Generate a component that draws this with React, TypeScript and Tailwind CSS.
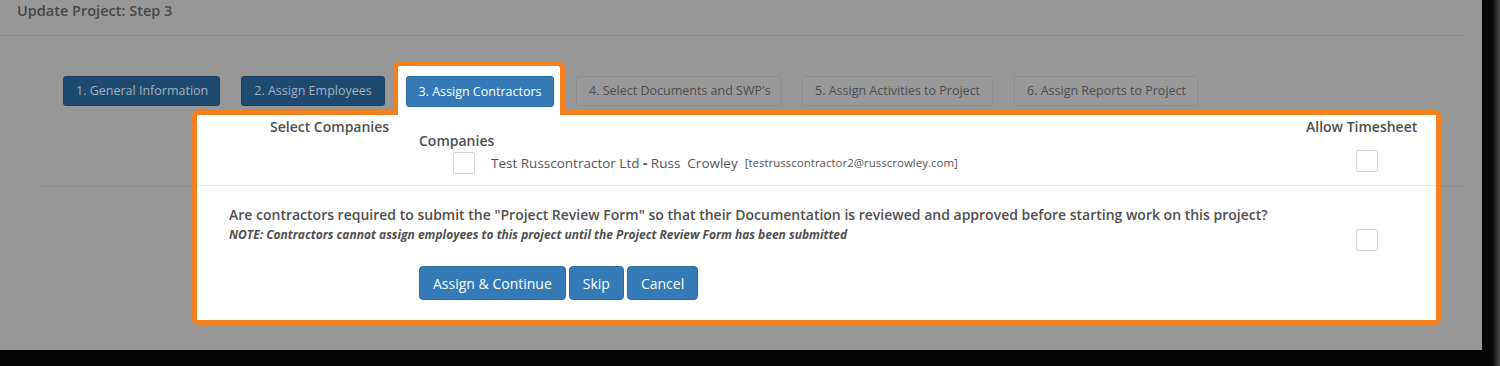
const font = { fontFamily: '"Open Sans", "Liberation Sans", sans-serif' };

const dimTab = 'h-[30px] px-[12px] rounded-[3px] text-[12.5px] leading-[28px] whitespace-nowrap';

const CheckBox = ({ className = '' }: { className?: string }) => (
  <div className={`w-[22px] h-[22px] border border-[#d4d4d4] rounded-[2px] bg-white ${className}`} />
);

const App = () => {
  return (
    <div
      className="w-[1500px] h-[366px] overflow-hidden bg-[linear-gradient(to_right,#050505_0,#050505_1492px,#4a4a4a_1500px)]"
      style={font}
    >
      <div className="w-[1482px] h-[350px] bg-[#979797] flex flex-col">
        {/* title */}
        <div className="h-[35px] pl-[17px] pt-[1px]">
          <p className="text-[14.5px] leading-[20px] font-semibold text-[#474747]">Update Project: Step 3</p>
        </div>
        <div className="w-[1465px] h-px bg-[#8b8b8b]" />

        {/* step tabs */}
        <div className="flex items-start mt-[25px] pl-[63px] relative z-10">
          <div className={`${dimTab} mt-[15px] w-[157px] bg-[#1f4a70] border border-[#1a3f60] text-[#a0b0bf] text-center`}>
            1. General Information
          </div>
          <div className={`${dimTab} mt-[15px] ml-[21px] w-[144px] bg-[#1f4a70] border border-[#1a3f60] text-[#a0b0bf] text-center`}>
            2. Assign Employees
          </div>
          <div className="ml-[8px] w-[172px] h-[54px] border-[5px] border-b-0 border-[#f4801f] rounded-t-[7px] bg-white pl-[8px] pt-[10px]">
            <div className="w-[148px] h-[31px] rounded-[3px] bg-[#337ab7] border border-[#2e6da4] text-white text-[12.5px] leading-[29px] text-center">
              3. Assign Contractors
            </div>
          </div>
          <div className={`${dimTab} mt-[15px] ml-[11px] w-[205px] bg-[#999] border border-[#8d8d8d] text-[#4c4c4c] text-center`}>
            4. Select Documents and SWP's
          </div>
          <div className={`${dimTab} mt-[15px] ml-[21px] w-[191px] bg-[#999] border border-[#8d8d8d] text-[#4c4c4c] text-center`}>
            5. Assign Activities to Project
          </div>
          <div className={`${dimTab} mt-[15px] ml-[21px] w-[184px] bg-[#999] border border-[#8d8d8d] text-[#4c4c4c] text-center`}>
            6. Assign Reports to Project
          </div>
        </div>

        {/* content row with highlighted panel */}
        <div className="flex ml-[38px] mt-[-5px]">
          <div className="w-[154px]">
            <div className="mt-[76px] h-px bg-[#8d8d8d]" />
          </div>

          <div className="w-[1249px] h-[215px] border-[5px] border-[#f4801f] rounded-[6px] bg-white flex flex-col text-[#4f4f4f]">
            {/* companies */}
            <div className="h-[71px] flex border-b border-[#ebebeb]">
              <div className="w-[222px] pl-[73px] pt-[2px]">
                <p className="text-[14px] leading-[19px] font-semibold">Select Companies</p>
              </div>
              <div className="flex-1 pt-[16px]">
                <p className="text-[14px] leading-[19px] font-semibold">Companies</p>
                <div className="flex items-center mt-[2px] ml-[34px]">
                  <CheckBox />
                  <span className="ml-[16px] text-[13.5px] text-[#555]">
                    Test Russcontractor Ltd <b className="font-bold">-</b> Russ&nbsp; Crowley
                  </span>
                  <span className="ml-[7px] text-[11.5px] text-[#555]">[testrusscontractor2@russcrowley.com]</span>
                </div>
              </div>
              <div className="w-[130px] pt-[2px]">
                <p className="text-[14px] leading-[19px] font-semibold">Allow Timesheet</p>
                <CheckBox className="mt-[14px] ml-[50px]" />
              </div>
            </div>

            {/* review form */}
            <div className="flex flex-1">
              <div className="flex-1 pl-[32px] pt-[19px]">
                <p className="text-[14px] leading-[19px] font-semibold">
                  Are contractors required to submit the "Project Review Form" so that their Documentation is reviewed and approved before starting work on this project?
                </p>
                <p className="mt-[3px] text-[12px] leading-[16px] font-bold italic text-[#505050]">
                  NOTE: Contractors cannot assign employees to this project until the Project Review Form has been submitted
                </p>
                <div className="flex gap-[3px] ml-[190px] mt-[23px]">
                  <button className="h-[34px] px-[13px] rounded-[4px] bg-[#337ab7] border border-[#2e6da4] text-white text-[14px]">
                    Assign &amp; Continue
                  </button>
                  <button className="h-[34px] px-[13px] rounded-[4px] bg-[#337ab7] border border-[#2e6da4] text-white text-[14px]">
                    Skip
                  </button>
                  <button className="h-[34px] px-[13px] rounded-[4px] bg-[#337ab7] border border-[#2e6da4] text-white text-[14px]">
                    Cancel
                  </button>
                </div>
              </div>
              <div className="w-[80px] pt-[43px]">
                <CheckBox />
              </div>
            </div>
          </div>

          <div className="w-[25px]">
            <div className="mt-[76px] h-px bg-[#8d8d8d]" />
          </div>
        </div>
      </div>
    </div>
  );
};

export default App;
